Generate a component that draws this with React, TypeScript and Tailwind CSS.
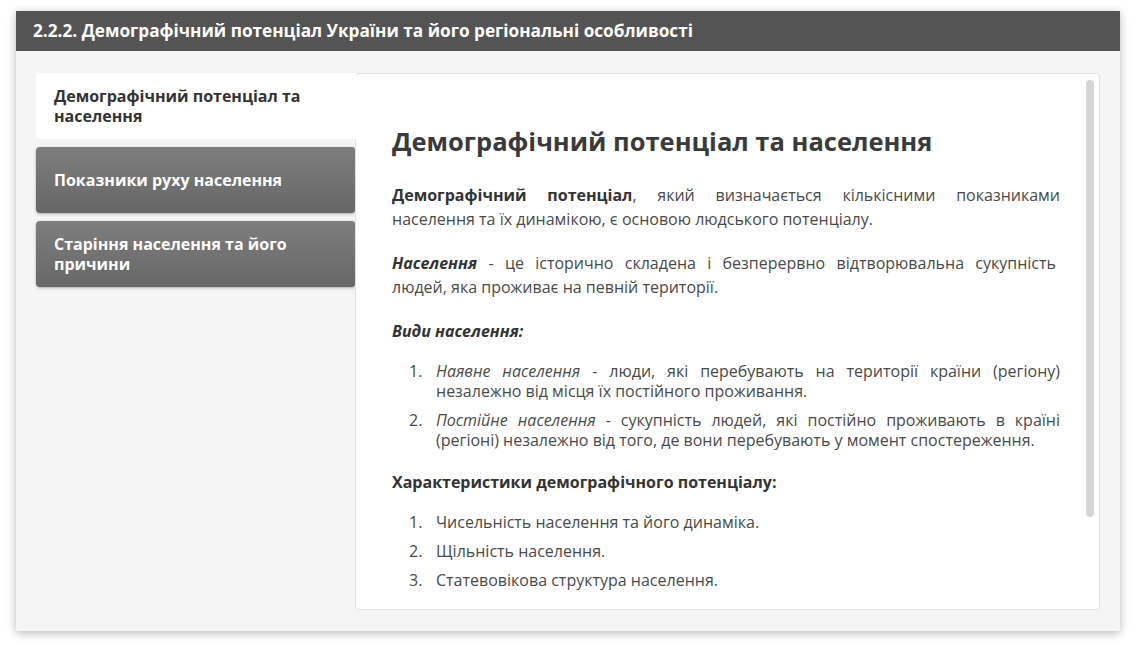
import React, { useState } from "react";

const tabs = [
    "Демографічний потенціал та населення",
    "Показники руху населення",
    "Старіння населення та його причини",
];

const App = () => {
    const [active, setActive] = useState(0);

    return (
        <div className="min-h-screen bg-white px-4 pt-[11px] font-['Open_Sans',sans-serif]">
            <div className="bg-[#f5f5f5] shadow-[0_2px_9px_rgba(0,0,0,0.28)] pb-[21px]">
                <div className="h-10 bg-[#545454] flex items-center px-[17px]">
                    <h1 className="text-white text-[17.2px] font-bold">
                        2.2.2. Демографічний потенціал України та його регіональні особливості
                    </h1>
                </div>

                <div className="flex px-5 pt-[22px]">
                    <div className="w-[319px] shrink-0 flex flex-col gap-2">
                        {tabs.map((t, i) => (
                            <button
                                key={t}
                                onClick={() => setActive(i)}
                                className={`min-h-[66px] flex items-center text-left px-[18px] text-[16px] leading-5 font-bold rounded-l-[4px] ${
                                    active === i
                                        ? "bg-white text-[#333] relative z-10 -mr-px"
                                        : "bg-gradient-to-b from-[#7e7e7e] to-[#676767] text-white shadow-[0_1px_3px_rgba(0,0,0,0.3)] rounded-r-[3px]"
                                }`}
                            >
                                {t}
                            </button>
                        ))}
                    </div>

                    <div className="relative w-[745px] h-[537px] bg-white border border-[#e2e2e2] rounded-[4px] overflow-hidden">
                        <div className="pl-9 pr-[39px] pt-[49px] text-[16px] text-[#4a4a4a]">
                            <h2 className="text-[25.5px] leading-9 font-bold text-[#3a3a3a] mb-[24px]">
                                Демографічний потенціал та населення
                            </h2>
                            <p className="text-justify leading-6 mb-5">
                                <b className="text-[#333]">Демографічний потенціал</b>, який визначається кількісними показниками населення та їх динамікою, є основою людського потенціалу.
                            </p>
                            <p className="text-justify leading-6 mb-5 pr-1">
                                <b className="text-[#333] italic">Населення</b> - це історично складена і безперервно відтворювальна сукупність людей, яка проживає на певній території.
                            </p>
                            <p className="leading-6 mb-[18px]">
                                <b className="text-[#333] italic">Види населення:</b>
                            </p>
                            <ol className="mb-[20px] flex flex-col gap-[9px]">
                                <li className="flex leading-5 pl-[17px]">
                                    <span className="w-[27px] shrink-0">1.</span>
                                    <span className="text-justify">
                                        <i>Наявне населення</i> - люди, які перебувають на території країни (регіону) незалежно від місця їх постійного проживання.
                                    </span>
                                </li>
                                <li className="flex leading-5 pl-[17px]">
                                    <span className="w-[27px] shrink-0">2.</span>
                                    <span className="text-justify">
                                        <i>Постійне населення</i> - сукупність людей, які постійно проживають в країні (регіоні) незалежно від того, де вони перебувають у момент спостереження.
                                    </span>
                                </li>
                            </ol>
                            <p className="leading-6 mb-[18px]">
                                <b className="text-[#333]">Характеристики демографічного потенціалу:</b>
                            </p>
                            <ol className="flex flex-col gap-[9px]">
                                {[
                                    "Чисельність населення та його динаміка.",
                                    "Щільність населення.",
                                    "Статевовікова структура населення.",
                                ].map((s, i) => (
                                    <li key={s} className="flex leading-5 pl-[17px]">
                                        <span className="w-[27px] shrink-0">{i + 1}.</span>
                                        <span>{s}</span>
                                    </li>
                                ))}
                            </ol>
                        </div>
                        <div className="absolute right-[5px] top-[6px] w-[8px] h-[437px] rounded-full bg-[#d6d6d6]" />
                    </div>
                </div>
            </div>
        </div>
    );
};

export default App;
